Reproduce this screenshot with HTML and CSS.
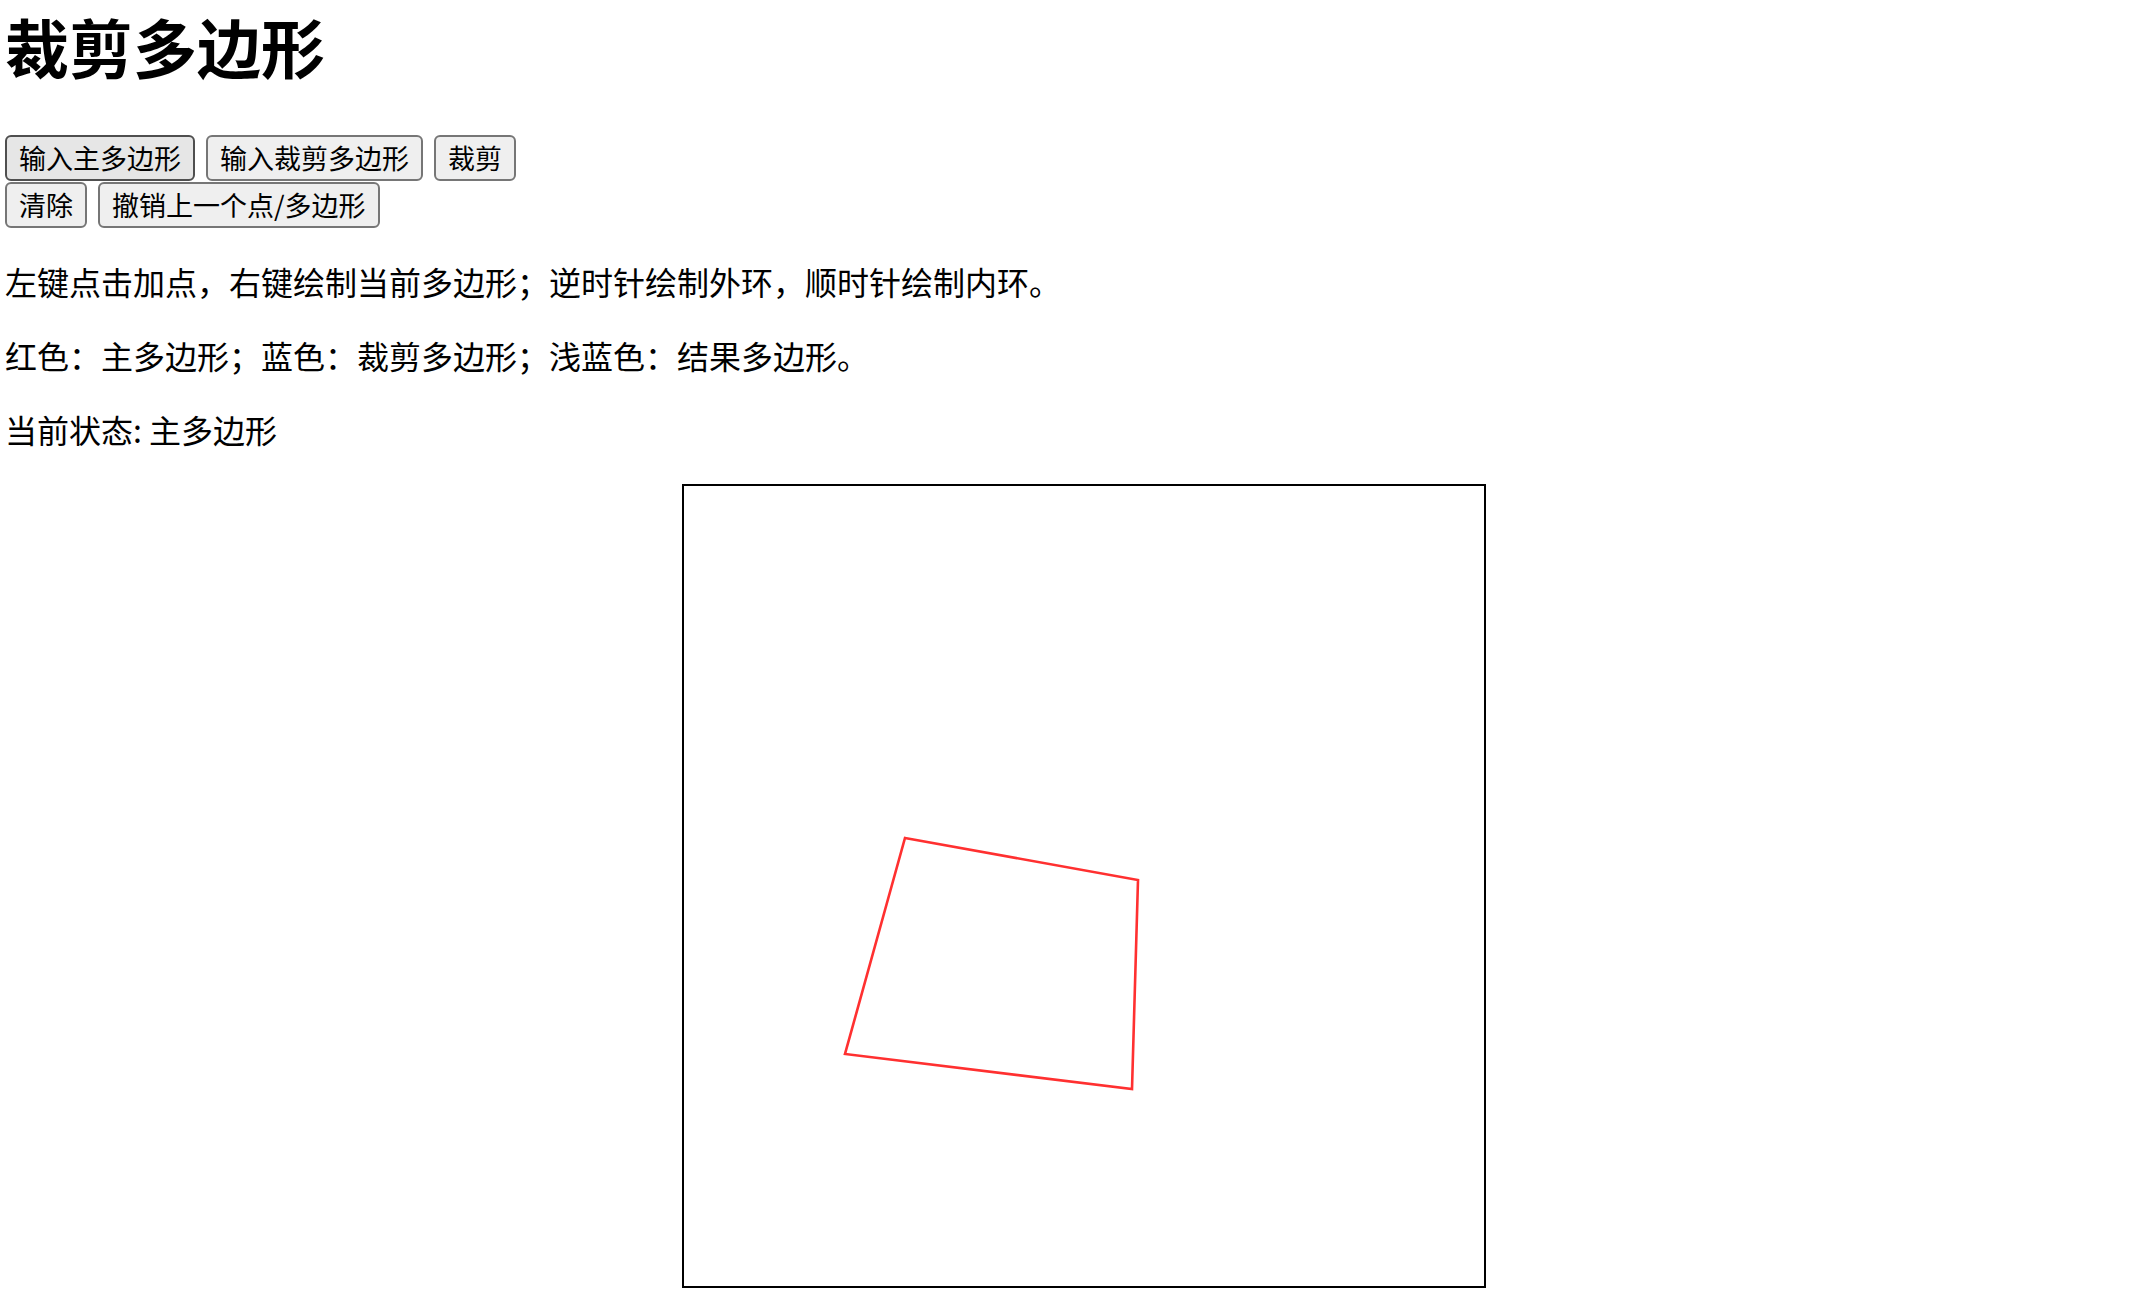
FILE: index.html
```html
<!DOCTYPE html>
<html lang="zh-CN">
<head>
<meta charset="utf-8">
<title>裁剪多边形</title>
<link rel="stylesheet" href="styles.css">
</head>
<body>
<h1 class="title">裁剪多边形</h1>
<div class="toolbar">
  <div class="row">
    <button class="btn btn-active">输入主多边形</button>
    <button class="btn">输入裁剪多边形</button>
    <button class="btn">裁剪</button>
  </div>
  <div class="row">
    <button class="btn">清除</button>
    <button class="btn">撤销上一个点/多边形</button>
  </div>
</div>
<p class="info info-first">左键点击加点，右键绘制当前多边形；逆时针绘制外环，顺时针绘制内环。</p>
<p class="info">红色：主多边形；蓝色：裁剪多边形；浅蓝色：结果多边形。</p>
<p class="info">当前状态: 主多边形</p>
<div class="canvas">
  <svg class="drawing" width="800" height="800" viewBox="0 0 800 800">
    <polygon points="221,352 454,394 448,603 161,568" fill="none" stroke="#ff3030" stroke-width="2.6" stroke-linejoin="miter"/>
  </svg>
</div>
</body>
</html>
```
FILE: styles.css
```css
html, body {
  margin: 0;
  padding: 0;
  background: #ffffff;
}
body {
  padding-left: 5px;
  font-family: "Noto Sans CJK SC", "Noto Sans", sans-serif;
  color: #000000;
}
.title {
  margin: 3px 0 48px;
  font-size: 64px;
  line-height: 84px;
  font-weight: 700;
}
.toolbar {
  display: flex;
  flex-direction: column;
  gap: 1px;
}
.row {
  display: flex;
  gap: 11px;
}
.btn {
  height: 46px;
  box-sizing: border-box;
  padding: 0 12px 2px;
  margin: 0;
  font-family: "Noto Sans CJK SC", "Noto Sans", sans-serif;
  font-size: 27px;
  line-height: 1;
  color: #000000;
  background: #efefef;
  border: 2px solid #767676;
  border-radius: 6px;
}
.btn-active {
  background: #e6e6e6;
  border-color: #4f4f4f;
}
.info {
  margin: 0 0 32px;
  font-size: 32px;
  line-height: 42px;
}
.info-first {
  margin-top: 32px;
}
.canvas {
  margin: 34px 0 0 677px;
  width: 800px;
  height: 800px;
  border: 2px solid #000000;
}
.drawing {
  display: block;
}
```
